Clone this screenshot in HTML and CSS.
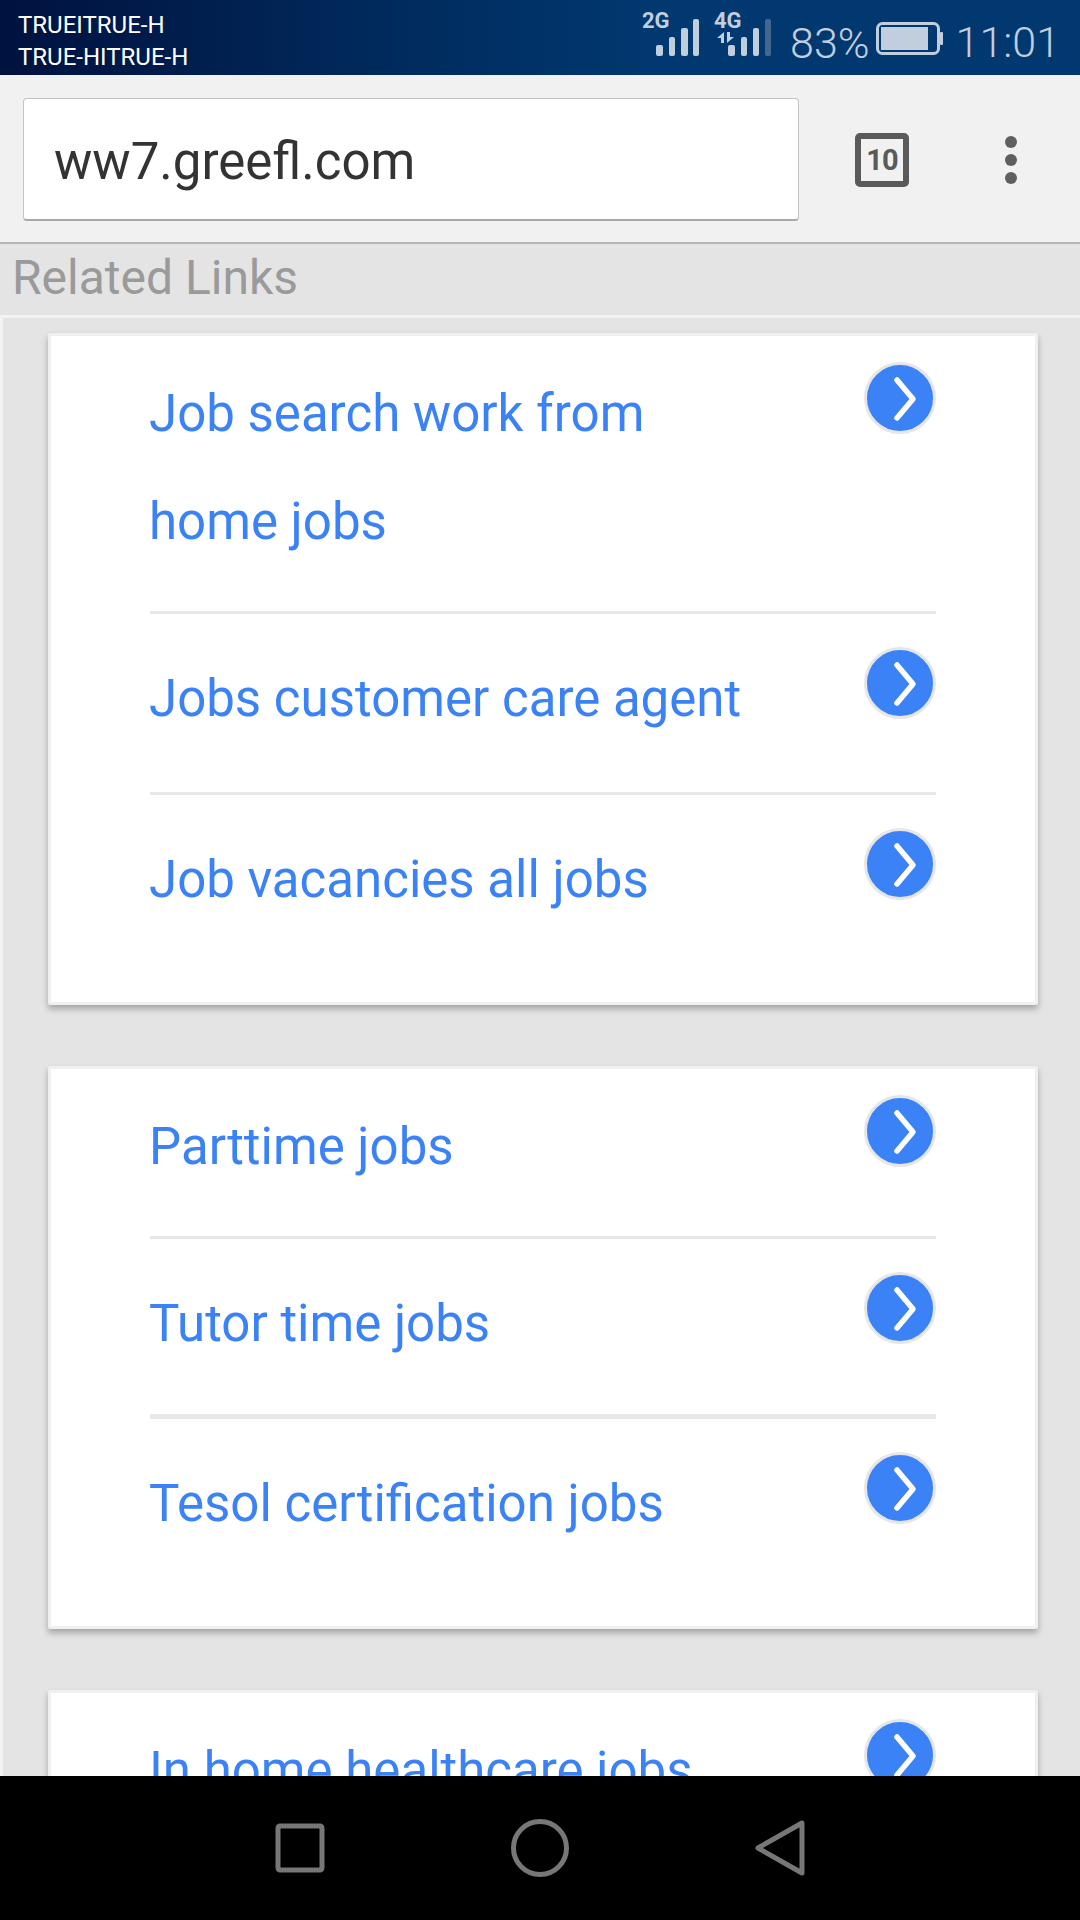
FILE: index.html
```html
<!DOCTYPE html>
<html>
<head>
  <title>Related Links</title>

  <link rel="stylesheet" href="styles.css">
</head>
<body>
  <!-- Android status bar -->
  <div class="status-bar">
    <div class="carrier">
      <div>TRUEITRUE-H</div>
      <div>TRUE-HITRUE-H</div>
    </div>
    <div class="status-right">
      <svg class="signal" width="130" height="60" viewBox="0 0 130 60">
        <text x="0" y="28" class="net-label">2G</text>
        <rect x="14" y="45" width="7" height="11" rx="2"/>
        <rect x="27" y="37" width="6" height="19" rx="2"/>
        <rect x="39" y="28" width="7" height="28" rx="2"/>
        <rect x="51" y="19" width="6" height="37" rx="2"/>
        <text x="72" y="28" class="net-label">4G</text>
        <path d="M82 32 V43 H79 V38 H75 Z M85 32 H88 V37 H92 L85 43 Z"/>
        <rect x="86" y="45" width="7" height="11" rx="2"/>
        <rect x="99" y="37" width="6" height="19" rx="2"/>
        <rect x="111" y="28" width="6" height="28" rx="2"/>
        <rect x="123" y="19" width="6" height="37" rx="2" class="dim"/>
      </svg>
      <span class="percent">83%</span>
      <svg class="battery" width="68" height="34" viewBox="0 0 68 34">
        <rect x="1.5" y="1.5" width="61" height="30" rx="5" class="battery-shell"/>
        <rect x="5" y="5" width="47" height="23"/>
        <rect x="64" y="10" width="3" height="13" rx="1"/>
      </svg>
      <span class="clock">11:01</span>
    </div>
  </div>

  <!-- Browser toolbar -->
  <div class="toolbar">
    <div class="url-box">ww7.greefl.com</div>
    <div class="tab-count">10</div>
    <div class="menu-dots">
      <span></span>
      <span></span>
      <span></span>
    </div>
  </div>

  <div class="section-title">Related Links</div>

  <div class="content">
    <div class="card">
      <div class="link-row first">
        <span class="link-text">Job search work from<br>home jobs</span>
        <svg class="arrow" width="72" height="72" viewBox="0 0 72 72"><circle cx="36" cy="36" r="34.5"/><path d="M33 18 L49 37 L33 56"/></svg>
      </div>
      <div class="link-row">
        <span class="link-text">Jobs customer care agent</span>
        <svg class="arrow" width="72" height="72" viewBox="0 0 72 72"><circle cx="36" cy="36" r="34.5"/><path d="M33 18 L49 37 L33 56"/></svg>
      </div>
      <div class="link-row last">
        <span class="link-text">Job vacancies all jobs</span>
        <svg class="arrow" width="72" height="72" viewBox="0 0 72 72"><circle cx="36" cy="36" r="34.5"/><path d="M33 18 L49 37 L33 56"/></svg>
      </div>
    </div>

    <div class="card">
      <div class="link-row first">
        <span class="link-text">Parttime jobs</span>
        <svg class="arrow" width="72" height="72" viewBox="0 0 72 72"><circle cx="36" cy="36" r="34.5"/><path d="M33 18 L49 37 L33 56"/></svg>
      </div>
      <div class="link-row thick">
        <span class="link-text">Tutor time jobs</span>
        <svg class="arrow" width="72" height="72" viewBox="0 0 72 72"><circle cx="36" cy="36" r="34.5"/><path d="M33 18 L49 37 L33 56"/></svg>
      </div>
      <div class="link-row last">
        <span class="link-text">Tesol certification jobs</span>
        <svg class="arrow" width="72" height="72" viewBox="0 0 72 72"><circle cx="36" cy="36" r="34.5"/><path d="M33 18 L49 37 L33 56"/></svg>
      </div>
    </div>

    <div class="card">
      <div class="link-row first">
        <span class="link-text">In home healthcare jobs</span>
        <svg class="arrow" width="72" height="72" viewBox="0 0 72 72"><circle cx="36" cy="36" r="34.5"/><path d="M33 18 L49 37 L33 56"/></svg>
      </div>
    </div>
  </div>

  <!-- Android navigation bar -->
  <div class="nav-bar">
    <svg width="60" height="60" viewBox="0 0 60 60"><rect x="8" y="8" width="44" height="44" rx="2"/></svg>
    <svg width="60" height="60" viewBox="0 0 60 60"><circle cx="30" cy="30" r="26.5"/></svg>
    <svg width="60" height="60" viewBox="0 0 60 60"><path d="M52 5 V55 L8 30 Z" class="nav-back"/></svg>
  </div>
</body>
</html>
```

FILE: styles.css
```css
* {
  box-sizing: border-box;
}

body {
  margin: 0;
  height: 1920px;
  display: flex;
  flex-direction: column;
  overflow: hidden;
  font-family: Roboto, "Liberation Sans", sans-serif;
  background-color: #e4e4e4;
}

/* Status bar */
.status-bar {
  height: 75px;
  flex: none;
  display: flex;
  align-items: stretch;
  padding: 9px 20px 0 18px;
  background: linear-gradient(90deg, #00123f 0%, #002a5c 35%, #00386f 60%, #00386f 100%);
}

.carrier {
  color: #fff;
  font-size: 24px;
  line-height: 32px;
}

.status-right {
  margin-left: auto;
  display: flex;
  align-items: flex-start;
  color: #c0cede;
  margin-top: -9px;
}

.signal {
  fill: #c0cede;
  margin-right: 18px;
}

.signal .dim {
  fill: #44678f;
}

.net-label {
  font-family: Roboto, sans-serif;
  font-size: 22px;
  font-weight: 700;
}

.percent {
  font-size: 43px;
  font-weight: 300;
  line-height: 86px;
  margin-right: 6px;
}

.battery {
  fill: #c0cede;
  margin-top: 22px;
  margin-right: 12px;
}

.battery-shell {
  fill: none;
  stroke: #c0cede;
  stroke-width: 3;
}

.clock {
  font-size: 43px;
  font-weight: 300;
  line-height: 84px;
}

/* Toolbar */
.toolbar {
  height: 169px;
  flex: none;
  display: flex;
  align-items: center;
  padding: 2px 0 0 23px;
  background-color: #f1f1f1;
  border-bottom: 2px solid #b5b5b5;
}

.url-box {
  width: 776px;
  height: 123px;
  display: flex;
  align-items: center;
  padding: 4px 0 0 30px;
  background-color: #fff;
  border: 1px solid #c4c4c4;
  border-bottom: 2px solid #a8a8a8;
  border-radius: 4px;
  color: #333;
  font-size: 51px;
}

.tab-count {
  width: 54px;
  height: 54px;
  margin-left: 56px;
  display: flex;
  align-items: center;
  justify-content: center;
  border: 6px solid #5a5a5a;
  border-radius: 5px;
  color: #5a5a5a;
  font-size: 29px;
  font-weight: 700;
  letter-spacing: -1px;
}

.menu-dots {
  margin-left: 96px;
  display: flex;
  flex-direction: column;
  gap: 6px;
}

.menu-dots span {
  width: 12px;
  height: 12px;
  border-radius: 50%;
  background-color: #5f5f5f;
}

.section-title {
  height: 71px;
  flex: none;
  padding-left: 12px;
  color: #9a9a9a;
  font-size: 48px;
  line-height: 68px;
}

/* Card list */
.content {
  flex: 1;
  min-height: 0;
  overflow: hidden;
  padding: 15px 42px 0 45px;
  border-top: 3px solid #f2f2f2;
  border-left: 3px solid #f2f2f2;
}

.card {
  margin-bottom: 61px;
  padding: 0 99px;
  background-color: #fff;
  border: 3px solid #f0f0f0;
  border-radius: 2px;
  box-shadow: 0 4px 6px rgba(0, 0, 0, 0.28);
}

.link-row {
  display: flex;
  justify-content: space-between;
  align-items: flex-start;
  padding: 31px 0 39px;
  border-bottom: 3px solid #e8e8e8;
}

.link-row.first {
  padding-top: 24px;
  padding-bottom: 35px;
}

.link-row.thick {
  border-bottom-width: 5px;
  padding-bottom: 36px;
}

.link-row.last {
  border-bottom: none;
  padding-bottom: 68px;
}

.link-text {
  margin-left: -1px;
  color: #3b82f6;
  font-size: 51px;
  line-height: 108px;
}

.arrow {
  flex: none;
  margin-top: 2px;
}

.arrow circle {
  fill: #3b82f6;
  stroke: #e6e6e6;
  stroke-width: 3;
}

.arrow path {
  fill: none;
  stroke: #fff;
  stroke-width: 5.5;
  stroke-linecap: round;
  stroke-linejoin: round;
}

/* Navigation bar */
.nav-bar {
  height: 144px;
  flex: none;
  display: flex;
  align-items: center;
  justify-content: center;
  gap: 180px;
  background-color: #000;
}

.nav-bar svg * {
  fill: none;
  stroke: #777;
  stroke-width: 5;
}

.nav-back {
  stroke-linejoin: round;
}
```
